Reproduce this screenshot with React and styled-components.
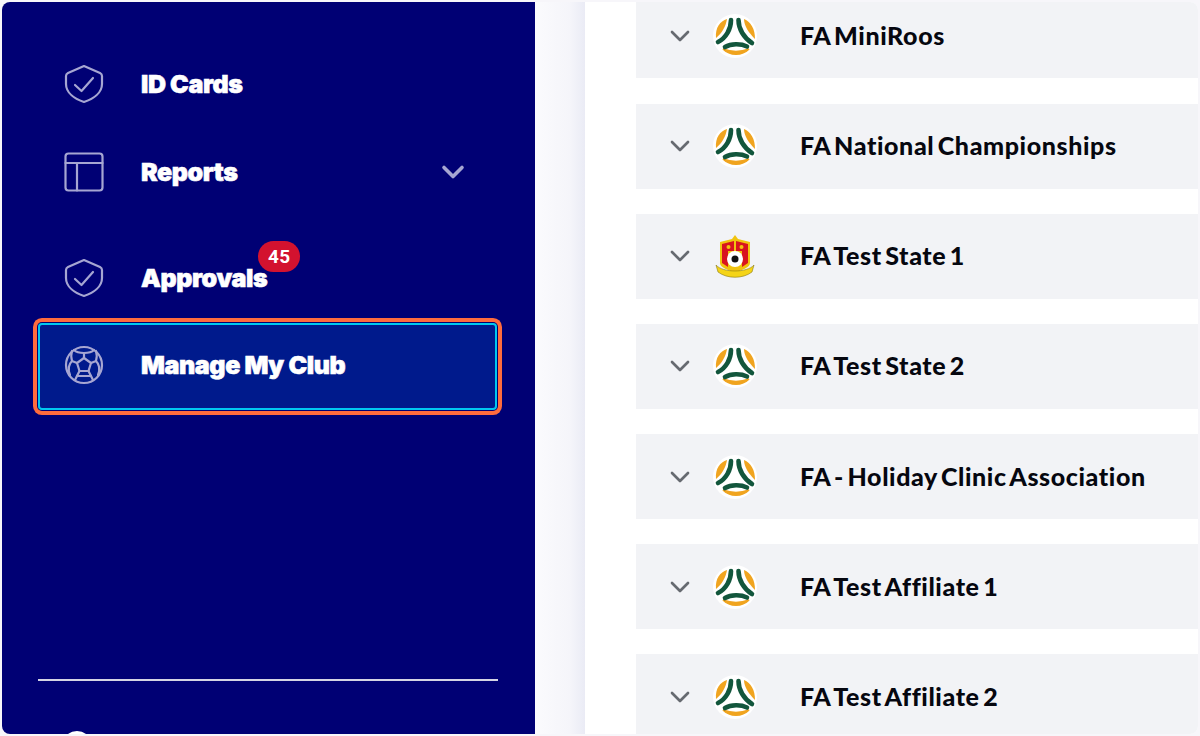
import React from "react";
import styled, { createGlobalStyle } from "styled-components";
import { ChevronDown } from "lucide-react";

const Global = createGlobalStyle`
  html, body { margin: 0; height: 100%; background: #f7f6fa; }
  #root { height: 100%; }
`;

const Window = styled.div`
  height: 736px;
  box-sizing: border-box;
  padding: 2px;
  overflow: hidden;
`;
const Frame = styled.div`
  height: 100%;
  display: flex;
  overflow: hidden;
  border-radius: 8px;
  background: #fff;
`;
const Sidebar = styled.aside`
  width: 533px;
  flex: none;
  display: flex;
  flex-direction: column;
  background: #000074;
  overflow: hidden;
`;
const Nav = styled.nav`
  display: flex;
  flex-direction: column;
  padding: 38px 38px 0 36px;
`;
const NavItem = styled.div`
  height: ${(p) => p.$height}px;
  margin-bottom: ${(p) => p.$gap || 0}px;
  display: flex;
  align-items: center;
  padding: 0 26px 0 26px;
  box-sizing: border-box;
  color: #fff;
  ${(p) =>
    p.$focused &&
    `
    padding-bottom: 3px;
    background: #001a8c;
    outline: 2px solid #00c8f0;
    outline-offset: -2px;
    box-shadow: 0 0 0 1px #000074, 0 0 0 5px #ff6b3d;
    border-radius: 4px;
  `}
`;
const NavIcon = styled.svg`
  width: 40px;
  height: 40px;
  flex: none;
  margin-right: 37px;
  fill: none;
  stroke: #a6a6d2;
  stroke-width: 2.2;
  stroke-linecap: round;
  stroke-linejoin: round;
`;
const NavLabel = styled.span`
  position: relative;
  font-family: Inter, "Liberation Sans", sans-serif;
  font-weight: 900;
  font-size: 25px;
  letter-spacing: -0.4px;
  -webkit-text-stroke: 0.6px #fff;
`;
const Badge = styled.span`
  position: absolute;
  right: -33px;
  top: -22px;
  width: 42px;
  height: 31px;
  border-radius: 16px;
  background: #d3122f;
  color: #fff;
  font-family: Roboto, sans-serif;
  font-weight: 700;
  font-size: 19px;
  letter-spacing: 0.5px;
  line-height: 31px;
  text-align: center;
  -webkit-text-stroke: 0;
`;
const Caret = styled(ChevronDown)`
  margin-left: auto;
  color: #a6a6d2;
`;
const SidebarFoot = styled.div`
  margin-top: auto;
  padding: 0 37px 0 36px;
`;
const Divider = styled.hr`
  height: 2px;
  margin: 0 0 50px;
  border: none;
  background: #d4d4e4;
`;
const FootDot = styled.div`
  width: 30px;
  height: 30px;
  margin: 0 0 -27px 24px;
  border-radius: 50%;
  background: #fff;
`;
const Shade = styled.div`
  width: 50px;
  flex: none;
  background: linear-gradient(90deg, #fbfbfd, #f5f5fa 70%, #eaebf5);
`;
const Main = styled.main`
  flex: 1;
  display: flex;
  flex-direction: column;
  gap: 25.2px;
  margin-top: -8.7px;
  padding-left: 51px;
`;
const Row = styled.div`
  height: 85px;
  flex: none;
  display: flex;
  align-items: center;
  padding-left: 28px;
  background: #f2f3f6;
`;
const RowCaret = styled(ChevronDown)`
  flex: none;
  color: #666a70;
  margin-right: 17px;
`;
const LogoSvg = styled.svg`
  width: 44px;
  height: 44px;
  flex: none;
  margin-right: 43px;
`;
const RowName = styled.span`
  padding-bottom: 2px;
  font-family: Lato, "Liberation Sans", sans-serif;
  font-weight: 900;
  font-size: 25px;
  letter-spacing: 0.6px;
  word-spacing: -3px;
  color: #06070f;
`;

const Shield = () => (
  <NavIcon viewBox="0 0 40 40">
    <path d="M20 2 L36 9 C37 9.500 38 10.500 38 12 V20 C38 29 29 35 20 38 C11 35 2 29 2 20 V12 C2 10.500 3 9.500 4 9 Z" />
    <path d="M11 21 L17.500 27 L29 14" />
  </NavIcon>
);
const Table = () => (
  <NavIcon viewBox="0 0 40 40">
    <rect x="1.500" y="1.500" width="37" height="37" rx="3" />
    <path d="M1.500 11 H38.500 M13 11 V38.500" />
  </NavIcon>
);
const Ball = () => (
  <NavIcon viewBox="0 0 40 40">
    <circle cx="20" cy="20" r="18" />
    <path d="M20 13 L27 18 L24.500 26 H15.500 L13 18 Z" />
    <path d="M20 13 V8 M27 18 L32 16 M13 18 L8 16 M24.500 26 L27 31 M15.500 26 L13 31" />
    <path d="M10 5 C14 9 26 9 30 5 M32 16 C33 12 33 9 32 6 M8 16 C7 12 7 9 8 6 M32 16 C36 20 36 25 34 30 M8 16 C4 20 4 25 6 30 M13 31 H27 M11 35 L13 31 M29 35 L27 31" />
  </NavIcon>
);

const FaLogo = () => (
  <LogoSvg viewBox="-22 -22 44 44">
    <circle r="22" fill="#fff" />
    <path d="M-8 -17 C-15 -15 -20 -8 -19 2 C-13 -3 -9 -10 -8 -17 Z" fill="#f0a41f" />
    <path d="M9 -17 C16 -14 20 -7 20 3 C14 -3 9 -10 9 -17 Z" fill="#f0a41f" />
    <path d="M-12 13 C-5 20 7 20 14 13 C6 16 -4 16 -12 13 Z" fill="#f0a41f" stroke="#f0a41f" strokeWidth="1.500" />
    <g fill="none" strokeLinecap="round" stroke="#12563c" strokeWidth="4.600">
      <path d="M-4 -16 C-4 -7 -9 2 -17 6" />
      <path d="M3.500 -16 C3.500 -7 9 2 17 7" />
      <path d="M-10 11 C-4 7.500 6 7.500 12 10.500" />
    </g>
  </LogoSvg>
);
const CrestLogo = () => (
  <LogoSvg viewBox="-22 -22 44 44">
    <path d="M-15 -14 L-3 -17 L0 -21 L3 -17 L15 -14 V7 C15 12 6 14 0 17 C-6 14 -15 12 -15 7 Z" fill="#f1c40f" />
    <path d="M-13 -12 L-1 -15 V-5 H-13 Z" fill="#d8141f" />
    <path d="M13 -12 L1 -15 V-5 H13 Z" fill="#d8141f" />
    <path d="M-13 -5 H-7 V11 L-13 7 Z M13 -5 H7 V11 L13 7 Z" fill="#d8141f" />
    <circle cx="-6.500" cy="-9" r="2" fill="#f1c40f" />
    <circle cx="6.500" cy="-9" r="2" fill="#f1c40f" />
    <circle cx="0" cy="3" r="8" fill="#fff" />
    <circle cx="0" cy="3" r="3.500" fill="#111" />
    <path d="M-19 9 C-12 17 12 17 19 9 L17 16 C8 23 -8 23 -17 16 Z" fill="#f5d417" stroke="#8a7a10" strokeWidth="0.600" />
  </LogoSvg>
);

const clubs = [
  { name: "FA MiniRoos" },
  { name: "FA National Championships" },
  { name: "FA Test State 1", crest: true },
  { name: "FA Test State 2" },
  { name: "FA - Holiday Clinic Association" },
  { name: "FA Test Affiliate 1" },
  { name: "FA Test Affiliate 2" },
];

export default function App() {
  return (
    <>
      <Global />
      <Window>
        <Frame>
          <Sidebar>
            <Nav>
              <NavItem $height={88}>
                <Shield />
                <NavLabel>ID Cards</NavLabel>
              </NavItem>
              <NavItem $height={88} $gap={18}>
                <Table />
                <NavLabel>Reports</NavLabel>
                <Caret size={36} strokeWidth={2.4} />
              </NavItem>
              <NavItem $height={87} $gap={2}>
                <Shield />
                <NavLabel>
                  Approvals
                  <Badge>45</Badge>
                </NavLabel>
              </NavItem>
              <NavItem $height={87} $focused>
                <Ball />
                <NavLabel>Manage My Club</NavLabel>
              </NavItem>
            </Nav>
            <SidebarFoot>
              <Divider />
              <FootDot />
            </SidebarFoot>
          </Sidebar>
          <Shade />
          <Main>
            {clubs.map((club) => (
              <Row key={club.name}>
                <RowCaret size={32} strokeWidth={2} />
                {club.crest ? <CrestLogo /> : <FaLogo />}
                <RowName>{club.name}</RowName>
              </Row>
            ))}
          </Main>
        </Frame>
      </Window>
    </>
  );
}
